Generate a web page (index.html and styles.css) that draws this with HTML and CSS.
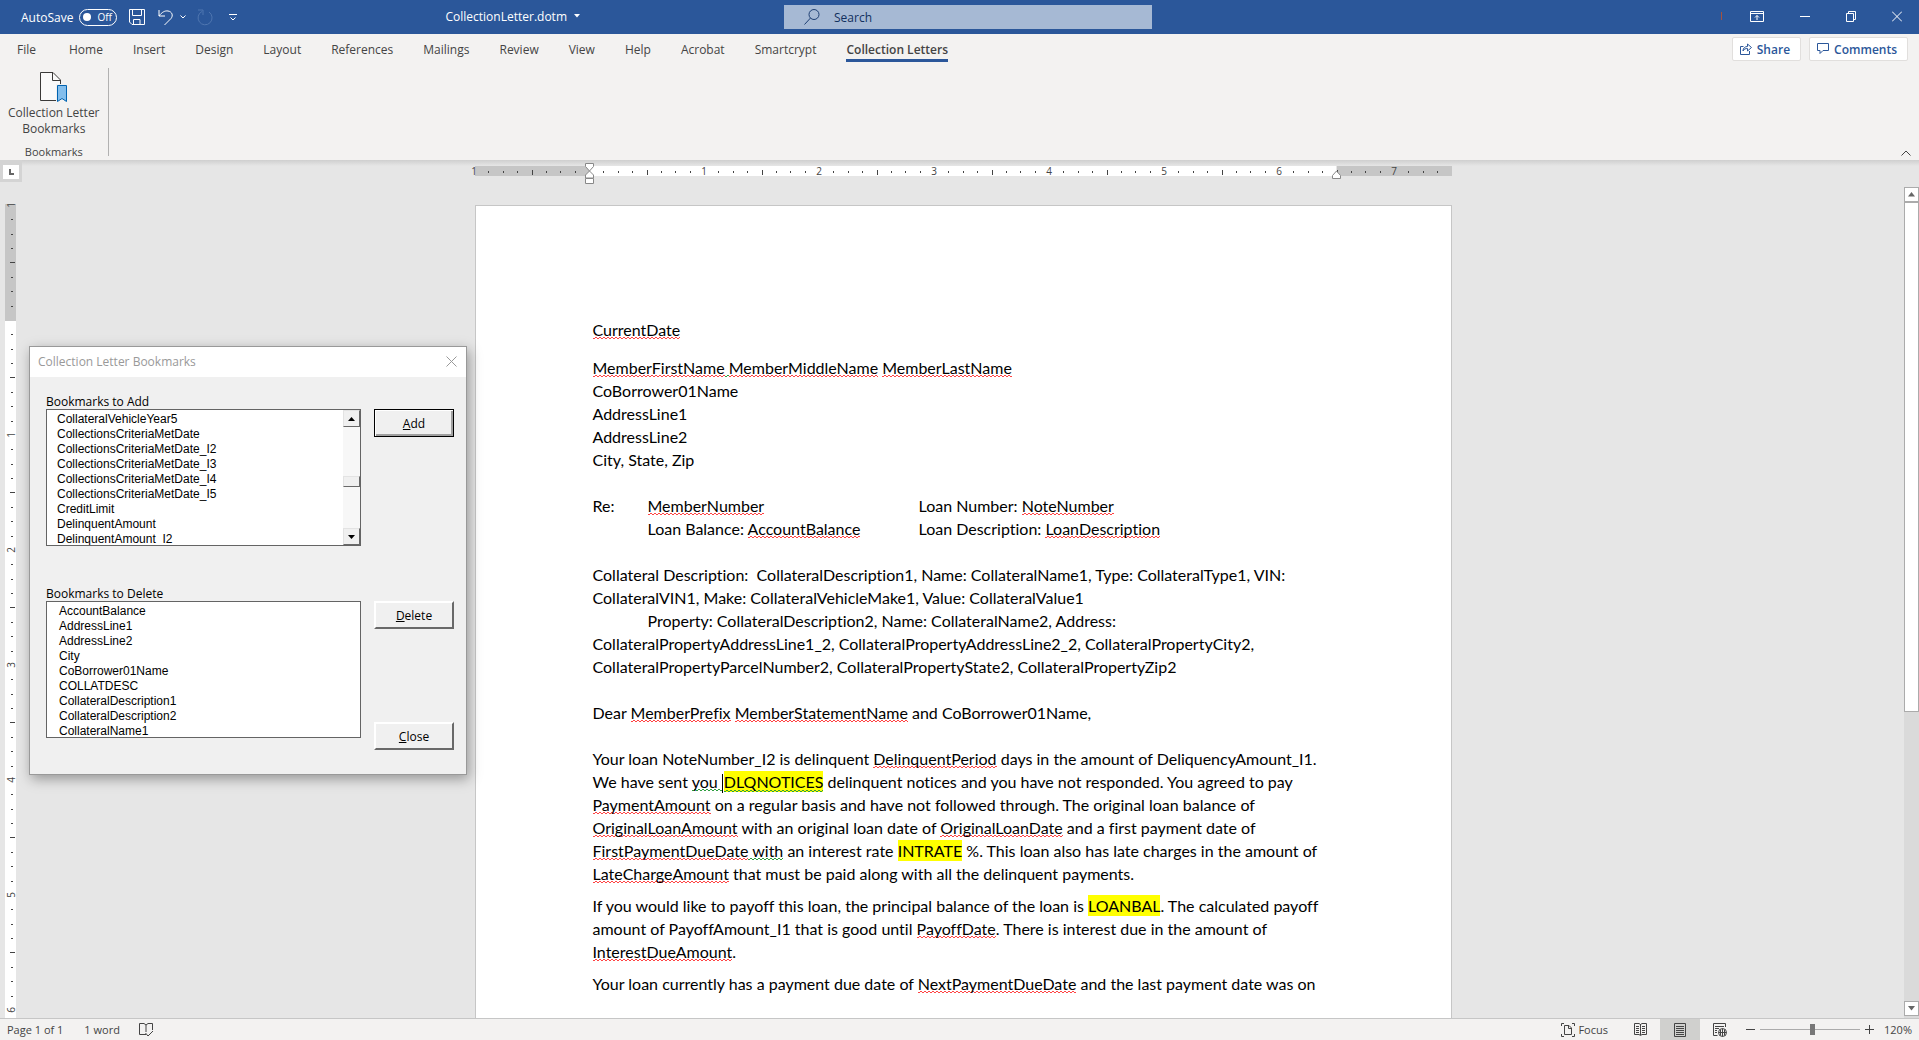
FILE: index.html
```html
<!DOCTYPE html>
<html lang="en">
<head>
    <meta charset="UTF-8">
    <meta name="viewport" content="width=device-width, initial-scale=1.0">
    <title>CollectionLetter.dotm</title>
    <link rel="stylesheet" href="styles.css">
</head>
<body>
    <header class="titlebar">
        <div class="quick-access">
            <label class="autosave" for="autosave">AutoSave</label>
            <span class="toggle"><input type="checkbox" id="autosave"><span>Off</span></span>
            <button class="icon-btn save" aria-label="Save">
                <svg width="16" height="16" viewBox="0 0 16 16"><path d="M.5.5h15v15H3L.5 13zM3.5.5v6h9v-6M4.5 15.500v-5h6.500v5"/></svg>
            </button>
            <button class="icon-btn undo" aria-label="Undo">
                <svg width="16" height="17" viewBox="0 0 16 17"><path d="M1 1v6h6M1 7C4 3 7 1.500 10 2c4 .5 5.500 4.500 3 7.500L6.500 16"/></svg>
            </button>
            <button class="icon-btn undo-more" aria-label="Undo history">
                <svg width="6" height="4" viewBox="0 0 6 4"><path d="M.5.5 3 3 5.500.5"/></svg>
            </button>
            <button class="icon-btn redo" aria-label="Redo" disabled>
                <svg width="16" height="17" viewBox="0 0 16 17"><path d="M1 1h5v5M5 2.500A7 7 0 1 0 12 3"/></svg>
            </button>
            <button class="icon-btn customize" aria-label="Customize toolbar">
                <svg width="8" height="7" viewBox="0 0 8 7"><path d="M0 .5h8M1.500 3.500 4 6l2.500-2.500"/></svg>
            </button>
            <button class="doc-name">CollectionLetter.dotm
                <svg width="6" height="4" viewBox="0 0 6 4"><path d="M0 0h6L3 3.500z"/></svg>
            </button>
        </div>
        <label class="search">
            <svg width="16" height="16" viewBox="0 0 16 16"><circle cx="10" cy="5.500" r="5"/><path d="M6.500 9 .5 15.500"/></svg>
            <input type="text" placeholder="Search" aria-label="Search">
        </label>
        <div class="window-buttons">
            <span class="account"></span>
            <button class="icon-btn" aria-label="Ribbon display options">
                <svg width="14" height="11" viewBox="0 0 14 11"><path d="M.5.5h13v10H.5zM.5 2.500h13M7 9V4.500M5 6.500l2-2 2 2"/></svg>
            </button>
            <button class="icon-btn" aria-label="Minimize">
                <svg width="10" height="11" viewBox="0 0 10 11"><path d="M0 5.500h10"/></svg>
            </button>
            <button class="icon-btn" aria-label="Restore">
                <svg width="10" height="11" viewBox="0 0 10 11"><path d="M.5 2.500h7v8h-7zM2.500 2.500V.5h7v8h-2"/></svg>
            </button>
            <button class="icon-btn" aria-label="Close">
                <svg width="10" height="11" viewBox="0 0 10 11"><path d="m0 .5 10 10M10 .5 0 10.500"/></svg>
            </button>
        </div>
    </header>

    <nav class="tabs">
        <a href="#" class="file">File</a>
        <a href="#">Home</a>
        <a href="#">Insert</a>
        <a href="#">Design</a>
        <a href="#">Layout</a>
        <a href="#">References</a>
        <a href="#">Mailings</a>
        <a href="#">Review</a>
        <a href="#">View</a>
        <a href="#">Help</a>
        <a href="#">Acrobat</a>
        <a href="#">Smartcrypt</a>
        <a href="#" class="active">Collection Letters</a>
        <div class="tab-actions">
            <button>
                <svg width="12" height="12" viewBox="0 0 12 12"><path d="M3.500 3.500h-3v8h9V8M3 8c0-3 2-4.500 4.500-4.500V1l4 3.500-4 3.500V5.500C5.500 5.500 4 6 3 8z"/></svg>
                Share
            </button>
            <button>
                <svg width="12" height="12" viewBox="0 0 12 12"><path d="M.5.5h11v7H6l-3 3v-3H.5z"/></svg>
                Comments
            </button>
        </div>
    </nav>

    <section class="ribbon">
        <div class="ribbon-group">
            <button class="ribbon-btn">
                <svg width="28" height="31" viewBox="0 0 28 31">
                    <path d="M.5.5H13l7.500 7.500v20.500H.5z" fill="#fafafa" stroke="#3b3a39"/>
                    <path d="M12.500.5v8h8" fill="none" stroke="#3b3a39"/>
                    <path d="M16 12h12v19H16z" fill="#f3f2f1" stroke="none"/>
                    <path d="M17.500 13.500h9v16L22 26.500l-4.500 3z" fill="#83beec" stroke="#0063b1"/>
                </svg>
                <span>Collection Letter</span>
                <span>Bookmarks</span>
            </button>
            <span class="group-name">Bookmarks</span>
        </div>
        <button class="collapse" aria-label="Collapse the ribbon">
            <svg width="10" height="6" viewBox="0 0 10 6"><path d="m.5 5.500 4.500-4.500 4.500 4.500"/></svg>
        </button>
    </section>

    <main class="workspace">
        <div class="ruler-row">
            <button class="tab-stop" aria-label="Left tab">
                <svg width="5" height="6" viewBox="0 0 5 6"><path d="M1 0v5h4"/></svg>
            </button>
            <svg class="ruler-h" width="978" height="24">
                <defs>
                    <pattern id="inch" x="0" y="6" width="115" height="11" patternUnits="userSpaceOnUse">
                        <path d="M14.500 5v2M29.500 5v2M43.500 5v2M72.500 5v2M86.500 5v2M101.500 5v2M58.500 4v5" stroke="#444"/>
                    </pattern>
                </defs>
                <rect x="1" y="6" width="114" height="10" fill="#c6c6c6"/>
                <rect x="116" y="6" width="746" height="10" fill="#fff"/>
                <rect x="863" y="6" width="115" height="10" fill="#c6c6c6"/>
                <rect y="6" width="978" height="10" fill="url(#inch)"/>
                <g class="marks">
                    <text x="0" y="15">1</text>
                    <text x="230" y="15">1</text>
                    <text x="345" y="15">2</text>
                    <text x="460" y="15">3</text>
                    <text x="575" y="15">4</text>
                    <text x="690" y="15">5</text>
                    <text x="805" y="15">6</text>
                    <text x="920" y="15">7</text>
                </g>
                <g fill="#fff" stroke="#888">
                    <path d="M111.500 3.500h8v3l-4 4.500-4-4.500z"/>
                    <path d="M111.500 18v-3l4-4 4 4v3z"/>
                    <path d="M111.500 18.500h8v5h-8z"/>
                    <path d="M858.500 18.500v-3l4-4.500 4 4.500v3z"/>
                </g>
            </svg>
        </div>

        <div class="ruler-column">
            <svg class="ruler-v">
                <defs>
                    <pattern id="inch-v" x="0" y="1" width="11" height="115" patternUnits="userSpaceOnUse">
                        <path d="M6 14.500h2M6 29.500h2M6 43.500h2M6 72.500h2M6 86.500h2M6 101.500h2M5 57.500h5" stroke="#444"/>
                    </pattern>
                </defs>
                <rect width="11" height="117" fill="#c6c6c6"/>
                <rect y="117" width="11" height="100%" fill="#fff"/>
                <rect width="11" height="100%" fill="url(#inch-v)"/>
                <g class="marks">
                    <text transform="translate(10 1) rotate(-90)">1</text>
                    <text transform="translate(10 231) rotate(-90)">1</text>
                    <text transform="translate(10 346) rotate(-90)">2</text>
                    <text transform="translate(10 461) rotate(-90)">3</text>
                    <text transform="translate(10 576) rotate(-90)">4</text>
                    <text transform="translate(10 691) rotate(-90)">5</text>
                    <text transform="translate(10 806) rotate(-90)">6</text>
                </g>
            </svg>
        </div>

        <div class="canvas">
            <article class="page">
                <p class="date"><span class="misspelled">CurrentDate</span></p>
                <p>
                    <span class="misspelled">MemberFirstName</span><span class="grammar"> </span><span class="misspelled">MemberMiddleName</span> <span class="misspelled">MemberLastName</span><br>
                    CoBorrower01Name<br>
                    AddressLine1<br>
                    AddressLine2<br>
                    City, State, Zip
                </p>
                <div class="reference">
                    <span>Re:</span>
                    <span class="misspelled">MemberNumber</span>
                    <span>Loan Number: <span class="misspelled">NoteNumber</span></span>
                    <span></span>
                    <span>Loan Balance: <span class="misspelled">AccountBalance</span></span>
                    <span>Loan Description: <span class="misspelled">LoanDescription</span></span>
                </div>
                <p>
                    Collateral Description:&nbsp; CollateralDescription1, Name: CollateralName1, Type: CollateralType1, VIN:<br>
                    CollateralVIN1, Make: CollateralVehicleMake1, Value: CollateralValue1<br>
                    <span class="indent">Property: CollateralDescription2, Name: CollateralName2, Address:</span><br>
                    CollateralPropertyAddressLine1_2, CollateralPropertyAddressLine2_2, CollateralPropertyCity2,<br>
                    CollateralPropertyParcelNumber2, CollateralPropertyState2, CollateralPropertyZip2
                </p>
                <p>Dear <span class="misspelled">MemberPrefix</span> <span class="misspelled">MemberStatementName</span> and CoBorrower01Name,</p>
                <p class="body-text">
                    Your loan NoteNumber_I2 is delinquent <span class="misspelled">DelinquentPeriod</span> days in the amount of DeliquencyAmount_I1.<br>
                    We have sent <span class="grammar">you </span><span class="caret"></span><mark class="grammar">DLQNOTICES</mark> delinquent notices and you have not responded. You agreed to pay<br>
                    <span class="misspelled">PaymentAmount</span> on a regular basis and have not followed through. The original loan balance of<br>
                    <span class="misspelled">OriginalLoanAmount</span> with an original loan date of <span class="misspelled">OriginalLoanDate</span> and a first payment date of<br>
                    <span class="misspelled">FirstPaymentDueDate</span><span class="grammar"> with</span> an interest rate <mark>INTRATE</mark> %. This loan also has late charges in the amount of<br>
                    <span class="misspelled">LateChargeAmount</span> that must be paid along with all the delinquent payments.
                </p>
                <p class="body-text">
                    If you would like to payoff this loan, the principal balance of the loan is <mark>LOANBAL</mark>. The calculated payoff<br>
                    amount of PayoffAmount_I1 that is good until <span class="misspelled">PayoffDate</span>. There is interest due in the amount of<br>
                    <span class="misspelled">InterestDueAmount</span>.
                </p>
                <p class="body-text">Your loan currently has a payment due date of <span class="misspelled">NextPaymentDueDate</span> and the last payment date was on</p>
            </article>
        </div>

        <div class="scrollbar">
            <button aria-label="Scroll up"><svg width="7" height="5" viewBox="0 0 7 5"><path d="M3.500 0 7 4.500H0z"/></svg></button>
            <div class="thumb"></div>
            <button aria-label="Scroll down"><svg width="7" height="5" viewBox="0 0 7 5"><path d="M0 0h7L3.500 4.500z"/></svg></button>
        </div>

        <div class="dialog" role="dialog" aria-labelledby="dialog-title">
            <div class="dialog-title">
                <span id="dialog-title">Collection Letter Bookmarks</span>
                <button aria-label="Close dialog"><svg width="11" height="11" viewBox="0 0 11 11"><path d="m.5.5 10 10M10.500.5l-10 10"/></svg></button>
            </div>
            <div class="dialog-body">
                <div class="field">
                    <label for="to-add">Bookmarks to Add</label>
                    <div class="listbox">
                        <select id="to-add" size="9">
                            <option>CollateralVehicleYear5</option>
                            <option>CollectionsCriteriaMetDate</option>
                            <option>CollectionsCriteriaMetDate_I2</option>
                            <option>CollectionsCriteriaMetDate_I3</option>
                            <option>CollectionsCriteriaMetDate_I4</option>
                            <option>CollectionsCriteriaMetDate_I5</option>
                            <option>CreditLimit</option>
                            <option>DelinquentAmount</option>
                            <option>DelinquentAmount_I2</option>
                        </select>
                        <div class="list-scroll">
                            <button aria-label="Up"><svg width="7" height="4" viewBox="0 0 7 4"><path d="M3.500 0 7 4H0z"/></svg></button>
                            <div class="list-thumb"></div>
                            <button aria-label="Down"><svg width="7" height="4" viewBox="0 0 7 4"><path d="M0 0h7L3.500 4z"/></svg></button>
                        </div>
                    </div>
                </div>
                <div class="actions">
                    <button class="default"><u>A</u>dd</button>
                </div>
                <div class="field">
                    <label for="to-delete">Bookmarks to Delete</label>
                    <div class="listbox delete-list">
                        <select id="to-delete" size="9">
                            <option>AccountBalance</option>
                            <option>AddressLine1</option>
                            <option>AddressLine2</option>
                            <option>City</option>
                            <option>CoBorrower01Name</option>
                            <option>COLLATDESC</option>
                            <option>CollateralDescription1</option>
                            <option>CollateralDescription2</option>
                            <option>CollateralName1</option>
                        </select>
                    </div>
                </div>
                <div class="actions">
                    <button><u>D</u>elete</button>
                    <button><u>C</u>lose</button>
                </div>
            </div>
        </div>
    </main>

    <footer class="statusbar">
        <span class="page-count">Page 1 of 1</span>
        <span class="word-count">1 word</span>
        <svg width="15" height="14" viewBox="0 0 15 14"><path d="M7 11.500H.5V.5H5l2 1.500 2-1.500h4.500V7M7 2v7M6.500 10l2.500 3 5-5"/></svg>
        <button class="focus">
            <svg width="14" height="14" viewBox="0 0 14 14"><path d="M3 .5H.5V3M11 .5h2.500V3M3 13.500H.5V11M11 13.500h2.500V11M3.500 2.500H8L10.500 5v6.500h-7zM7.500 2.500v3h3"/></svg>
            Focus
        </button>
        <button class="view" aria-label="Read mode">
            <svg width="13" height="13" viewBox="0 0 13 13"><path d="M6.500 1.500 5 .5H.5v11H5l1.500 1 1.500-1h4.500V.5H8zM6.500 1v11M2 3.500h3M2 5.500h3M2 7.500h3M2 9.500h3M8 3.500h3M8 5.500h3M8 7.500h3M8 9.500h3"/></svg>
        </button>
        <button class="view selected" aria-label="Print layout">
            <svg width="12" height="14" viewBox="0 0 12 14"><path d="M.5.5h11v13H.5zM2 3.500h8M2 5.500h8M2 7.500h8M2 9.500h8M2 11.500h8"/></svg>
        </button>
        <button class="view" aria-label="Web layout">
            <svg width="14" height="14" viewBox="0 0 14 14"><path d="M4.500 12.500h-4V.5h12V4M2 3.500h9M2 5.500h4M2 7.500h2M2 9.500h2"/><circle cx="9.500" cy="9.500" r="4"/><path d="M5.500 9.500h8M9.500 5.500v8M7.500 6.500v6M11.500 6.500v6"/></svg>
        </button>
        <button class="zoom-step" aria-label="Zoom out"><svg width="9" height="9" viewBox="0 0 9 9"><path d="M0 4.500h9"/></svg></button>
        <input class="zoom" type="range" min="0" max="100" value="53" aria-label="Zoom">
        <button class="zoom-step" aria-label="Zoom in"><svg width="9" height="9" viewBox="0 0 9 9"><path d="M0 4.500h9M4.500 0v9"/></svg></button>
        <span class="percent">120%</span>
    </footer>
</body>
</html>
```
FILE: styles.css
```css
* {
    box-sizing: border-box;
}
body {
    margin: 0;
    height: 100vh;
    display: flex;
    flex-direction: column;
    overflow: hidden;
    font-family: 'Open Sans', 'Noto Sans', sans-serif;
    font-size: 12px;
    color: #444;
    background-color: #e6e6e6;
}
button {
    font: inherit;
    color: inherit;
    background: none;
    border: none;
    padding: 0;
    display: flex;
    align-items: center;
    justify-content: center;
}
svg {
    display: block;
    flex: none;
    fill: none;
    stroke: currentColor;
}

/* Title bar */
.titlebar {
    height: 34px;
    display: grid;
    grid-template-columns: 1fr 368px 1fr;
    align-items: center;
    padding-left: 17px;
    background-color: #2b579a;
    color: #fff;
}
.quick-access {
    display: flex;
    align-items: center;
    padding-left: 4px;
}
.toggle {
    display: flex;
    align-items: center;
    gap: 6px;
    width: 38px;
    height: 17px;
    margin-left: 6px;
    padding-left: 3px;
    border: 1px solid #fff;
    border-radius: 9px;
    font-size: 10px;
}
.toggle input {
    appearance: none;
    flex: none;
    width: 8px;
    height: 8px;
    margin: 0;
    border-radius: 50%;
    background-color: #fff;
}
.save {
    margin-left: 12px;
}
.undo {
    margin-left: 13px;
}
.undo-more {
    margin-left: 6px;
}
.redo {
    margin-left: 11px;
    color: #4f76b0;
}
.customize {
    margin-left: 16px;
}
.doc-name {
    gap: 7px;
    margin-left: auto;
    margin-right: 204px;
    padding-bottom: 2px;
}
.doc-name svg {
    fill: #fff;
    stroke: none;
}
.search {
    display: flex;
    align-items: center;
    gap: 14px;
    height: 24px;
    padding-left: 20px;
    background-color: #a6b9d4;
    color: #1e3f73;
}
.search input {
    flex: 1;
    min-width: 0;
    padding: 0;
    border: none;
    outline: none;
    background: none;
    font: inherit;
    color: inherit;
}
.search input::placeholder {
    color: #12305e;
    opacity: 1;
}
.window-buttons {
    display: flex;
    align-items: center;
    justify-content: flex-end;
    padding-right: 17px;
    padding-bottom: 2px;
    gap: 36px;
}
.account {
    width: 1px;
    height: 8px;
    margin-right: -8px;
    background-color: #a5523f;
}

/* Tabs */
.tabs {
    display: flex;
    align-items: center;
    gap: 30px;
    height: 32px;
    padding: 0 11px 0 17px;
    background-color: #f3f2f1;
}
.tabs a {
    padding: 3px 0 1px;
    line-height: 17px;
    border-bottom: 3px solid transparent;
    color: #444;
    text-decoration: none;
    white-space: nowrap;
}
.tabs .file {
    margin-right: 3px;
}
.tabs .active {
    font-weight: 600;
    border-bottom-color: #2b579a;
}
.tab-actions {
    display: flex;
    gap: 8px;
    margin-left: auto;
    padding-bottom: 2px;
}
.tab-actions button {
    gap: 5px;
    height: 24px;
    padding: 0 10px 0 7px;
    border: 1px solid #e1dfdd;
    border-radius: 2px;
    background-color: #fff;
    color: #2b579a;
    font-weight: 600;
}

/* Ribbon */
.ribbon {
    display: flex;
    align-items: flex-end;
    justify-content: space-between;
    height: 94px;
    padding: 2px 8px 4px 0;
    background-color: #f3f2f1;
}
.ribbon-group {
    display: flex;
    flex-direction: column;
    justify-content: space-between;
    align-items: center;
    height: 88px;
    padding: 4px 8px 0;
    border-right: 1px solid #b1b1b1;
}
.ribbon-btn {
    flex-direction: column;
    line-height: 16px;
}
.ribbon-btn svg {
    margin-bottom: 2px;
}
.group-name {
    font-size: 11px;
    line-height: 8px;
}

/* Workspace */
.workspace {
    position: relative;
    flex: 1;
    min-height: 0;
    overflow: hidden;
    display: grid;
    grid-template-columns: 22px 1fr 15px;
    grid-template-rows: 27px 1fr;
    background: linear-gradient(#cfcfcf, #e6e6e6 6px);
}
.ruler-row {
    grid-column: 1 / 4;
    display: flex;
    padding-right: 15px;
}
.tab-stop {
    width: 22px;
    height: 22px;
    border: 3px solid #d4d4d4;
    border-top-width: 5px;
    background-color: #fff;
}
.tab-stop svg {
    stroke: #666;
    stroke-width: 2;
}
.ruler-h {
    margin: 0 auto;
    overflow: visible;
    stroke: none;
}
.marks {
    fill: #444;
    stroke: none;
    font-size: 10px;
    text-anchor: middle;
}
.ruler-column {
    min-height: 0;
    padding: 17px 0 0 5px;
}
.ruler-v {
    width: 11px;
    height: 100%;
    overflow: visible;
    stroke: none;
}
.canvas {
    overflow: hidden;
    padding-top: 18px;
}
.page {
    width: 977px;
    min-height: 1267px;
    margin: 0 auto;
    padding: 112px 117px;
    border: 1px solid #c6c6c6;
    background-color: #fff;
    color: #000;
    font-family: Lato, 'Open Sans', sans-serif;
    font-size: 16px;
    line-height: 23px;
    font-variant-ligatures: none;
    white-space: nowrap;
}
.page p {
    margin: 0 0 23px;
}
.page .date {
    margin-bottom: 15px;
}
.page .body-text {
    margin-bottom: 9px;
}
.reference {
    display: grid;
    grid-template-columns: 55px 271px 1fr;
    justify-items: start;
    align-items: center;
    margin-bottom: 23px;
}
.indent {
    padding-left: 55px;
}
/* Two offset rows of dashes make the proofing squiggle */
.misspelled,
.grammar {
    background-image:
        linear-gradient(90deg, var(--squiggle) 50%, transparent 50%),
        linear-gradient(90deg, transparent 50%, var(--squiggle) 50%);
    background-size: 4px 1px;
    background-position: 0 100%, 0 calc(100% - 1px);
    background-repeat: repeat-x;
}
.misspelled {
    --squiggle: #f44;
}
.grammar {
    --squiggle: #2e9e3f;
}
.reference > .misspelled {
    line-height: 19px;
}
mark {
    padding: 1px 0;
    background-color: #ff0;
    color: #000;
}
.caret {
    display: inline-block;
    width: 1px;
    height: 19px;
    margin-right: 1px;
    vertical-align: middle;
    background-color: #000;
}
.scrollbar {
    display: flex;
    flex-direction: column;
    padding-bottom: 2px;
    background-color: #dadada;
}
.scrollbar button {
    height: 15px;
    border: 1px solid #ababab;
    background-color: #fff;
}
.scrollbar svg,
.list-scroll svg {
    fill: #666;
    stroke: none;
}
.thumb {
    height: 510px;
    margin-bottom: auto;
    border: 1px solid #ababab;
    background-color: #fff;
}

/* Bookmarks dialog */
.dialog {
    position: absolute;
    top: 186px;
    left: 29px;
    width: 438px;
    border: 1px solid #999;
    background-color: #f0f0f0;
    color: #000;
    box-shadow: 2px 4px 12px rgba(0, 0, 0, 0.35);
}
.dialog-title {
    display: flex;
    align-items: center;
    justify-content: space-between;
    height: 30px;
    padding: 0 9px 2px 8px;
    background-color: #fff;
    color: #999;
}
.dialog-body {
    display: grid;
    grid-template-columns: 315px 80px;
    gap: 41px 13px;
    padding: 18px 0 24px 16px;
}
.field label {
    display: block;
    line-height: 14px;
}
.listbox {
    display: flex;
    height: 137px;
    border: 1px solid #646464;
    background-color: #fff;
}
.listbox select {
    flex: 1;
    overflow: hidden;
    height: 135px;
    padding: 2px 0 0;
    border: none;
    outline: none;
    background: none;
    color: #000;
    font-family: 'Liberation Sans', Arial, sans-serif;
    font-size: 12px;
}
.listbox option {
    height: 15px;
    min-height: 15px;
    padding: 0 0 0 10px;
    line-height: 15px;
}
.delete-list option {
    padding-left: 12px;
}
.list-scroll {
    display: flex;
    flex-direction: column;
    width: 17px;
    background-color: #f7f7f7;
}
.list-scroll button,
.list-thumb {
    height: 17px;
    border: 1px solid;
    border-color: #e3e3e3 #696969 #696969 #e3e3e3;
    background-color: #f0f0f0;
}
.list-scroll svg {
    fill: #000;
}
.list-thumb {
    height: 11px;
    margin: 49px 0 auto;
}
.actions {
    display: flex;
    flex-direction: column;
    gap: 93px;
    padding-top: 14px;
}
.actions button {
    display: block;
    height: 28px;
    border: 2px solid;
    border-color: #fff #696969 #696969 #fff;
    background-color: #f0f0f0;
}
.actions .default {
    border: 1px solid #000;
    box-shadow: inset 1px 1px #fff, inset -2px -2px #a0a0a0;
}

/* Status bar */
.statusbar {
    display: flex;
    align-items: center;
    height: 22px;
    padding: 0 7px;
    border-top: 1px solid #c6c6c6;
    background-color: #f3f2f1;
    font-size: 11px;
}
.word-count {
    margin: 0 19px 0 21px;
}
.focus {
    gap: 3px;
    margin-left: auto;
    margin-right: 12px;
}
.view {
    width: 40px;
    height: 100%;
}
.view.selected {
    background-color: #d0d0ce;
}
.view + .zoom-step {
    margin-left: 6px;
}
.zoom {
    appearance: none;
    width: 100px;
    height: 12px;
    margin: 0 5px;
    background: linear-gradient(#ababab, #ababab) center / 100% 1px no-repeat;
}
.zoom::-webkit-slider-thumb {
    appearance: none;
    width: 5px;
    height: 11px;
    background-color: #777;
}
.percent {
    width: 38px;
    text-align: right;
}
```
